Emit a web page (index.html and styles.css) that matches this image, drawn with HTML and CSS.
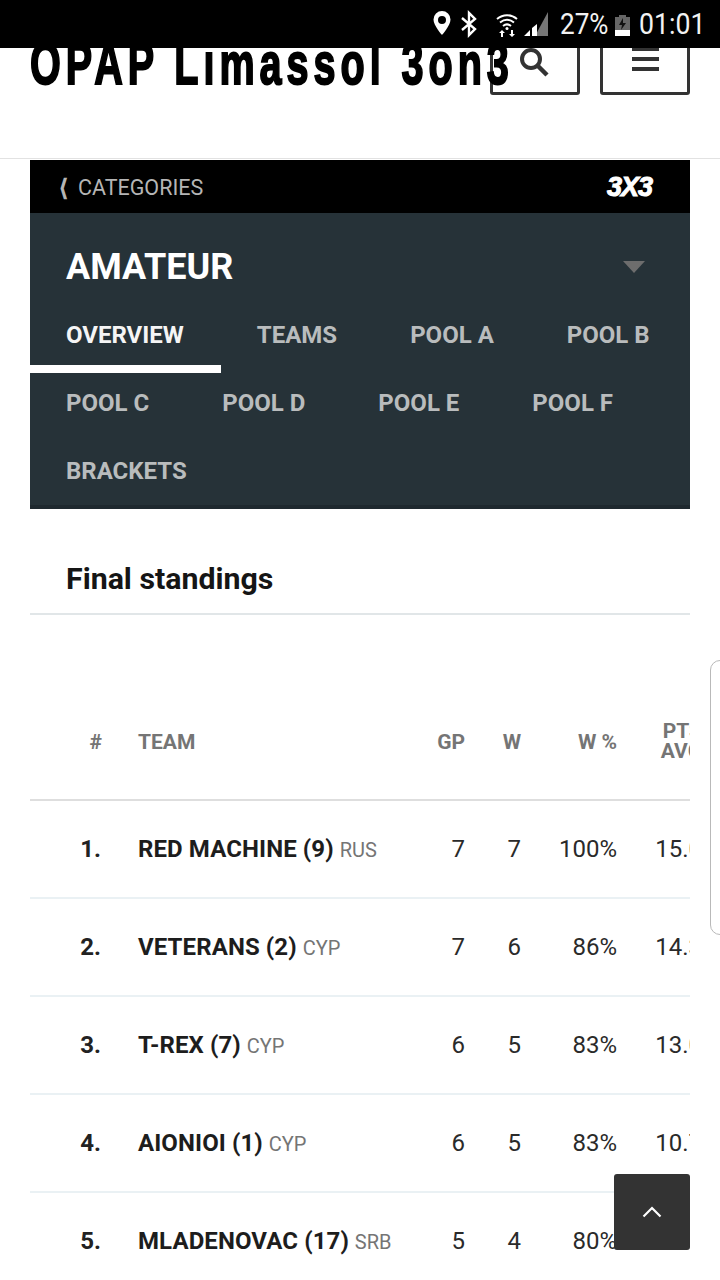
FILE: index.html
```html
<!DOCTYPE html>
<html lang="en">
<head>
<meta charset="utf-8">
<title>OPAP Limassol 3on3</title>
<link rel="stylesheet" href="styles.css">
</head>
<body>
<div class="statusbar">
  <svg class="si" width="20" height="28" viewBox="0 0 20 28"><path fill-rule="evenodd" fill="#fff" d="M10 1a8.500 8.500 0 0 0-8.500 8.500C1.500 15.500 10 25 10 25s8.500-9.500 8.500-15.500A8.500 8.500 0 0 0 10 1zm0 5a4 4 0 1 1 0 8 4 4 0 0 1 0-8z"/></svg>
  <svg class="si bt" width="18" height="28" viewBox="0 0 18 28"><path fill="none" stroke="#fff" stroke-width="2.400" d="M2 8l13 11-6 6V3l6 6L2 20"/></svg>
  <svg class="si wifi" width="24" height="28" viewBox="0 0 24 28"><g fill="none" stroke="#fff" stroke-width="2"><path d="M2 9c6-5 14-5 20 0"/><path d="M5 12.500c4.500-3.500 9.500-3.500 14 0"/><path d="M8 16c2.500-2 5.500-2 8 0"/></g><circle cx="12" cy="18.500" r="1.500" fill="#fff"/><path fill="#fff" d="M6 27v-4H4l3-3 3 3H8v4zM16 20v4h-2l3 3 3-3h-2v-4z"/></svg>
  <svg class="si sig" width="26" height="28" viewBox="0 0 26 28"><path fill="#777" d="M25 2v24H12z"/><path fill="#fff" d="M1 26l6-6v6zM9 18l5-4v12H9z"/></svg>
  <span class="pct">27%</span>
  <svg class="si batt" width="17" height="28" viewBox="0 0 17 28"><path fill="#666" d="M5 5h7v2h4v19H1V7h4z"/><path fill="#fff" d="M1 20h15v6H1z"/><path fill="#111" d="M9 8l-4 7h3l-1 5 5-7H9z"/></svg>
  <span class="clock">01:01</span>
</div>

<header class="site-header">
  <div class="logo">OPAP Limassol 3on3</div>
  <div class="hbtn search">
    <svg width="32" height="32" viewBox="0 0 32 32"><circle cx="13" cy="13" r="9" fill="none" stroke="#333" stroke-width="4"/><path d="M20 20l9 9" stroke="#333" stroke-width="4.500"/></svg>
  </div>
  <div class="hbtn menu">
    <span class="bar"></span><span class="bar"></span><span class="bar"></span>
  </div>
</header>

<section class="event">
  <div class="catbar">
    <span class="cat-link"><span class="cat-chev">&#10216;</span>CATEGORIES</span>
    <span class="mark">3X3</span>
  </div>
  <div class="panel">
    <div class="panel-title">
      <h1>AMATEUR</h1>
      <span class="caret"></span>
    </div>
    <nav class="tabs">
      <a class="tab active">OVERVIEW</a>
      <a class="tab">TEAMS</a>
      <a class="tab">POOL A</a>
      <a class="tab">POOL B</a>
      <a class="tab">POOL C</a>
      <a class="tab">POOL D</a>
      <a class="tab">POOL E</a>
      <a class="tab">POOL F</a>
      <a class="tab">BRACKETS</a>
    </nav>
  </div>
</section>

<section class="standings">
  <h2>Final standings</h2>
  <div class="table-wrap">
    <table>
      <colgroup>
        <col class="c-rank"><col class="c-team"><col class="c-gp"><col class="c-w"><col class="c-wp"><col class="c-pts">
      </colgroup>
      <thead>
        <tr><th>#</th><th class="left">TEAM</th><th>GP</th><th>W</th><th>W %</th><th class="two">PTS<br>AVG</th></tr>
      </thead>
      <tbody>
        <tr><td class="rank">1.</td><td class="team"><b>RED MACHINE (9)</b> <span>RUS</span></td><td>7</td><td>7</td><td>100%</td><td>15.0</td></tr>
        <tr><td class="rank">2.</td><td class="team"><b>VETERANS (2)</b> <span>CYP</span></td><td>7</td><td>6</td><td>86%</td><td>14.3</td></tr>
        <tr><td class="rank">3.</td><td class="team"><b>T-REX (7)</b> <span>CYP</span></td><td>6</td><td>5</td><td>83%</td><td>13.0</td></tr>
        <tr><td class="rank">4.</td><td class="team"><b>AIONIOI (1)</b> <span>CYP</span></td><td>6</td><td>5</td><td>83%</td><td>10.7</td></tr>
        <tr><td class="rank">5.</td><td class="team"><b>MLADENOVAC (17)</b> <span>SRB</span></td><td>5</td><td>4</td><td>80%</td><td>10.4</td></tr>
      </tbody>
    </table>
  </div>
</section>

<div class="edge-handle"></div>
<div class="to-top">
  <svg width="20" height="12" viewBox="0 0 20 12"><path d="M1.500 10.500L10 2l8.500 8.500" fill="none" stroke="#fff" stroke-width="2.200"/></svg>
</div>
</body>
</html>
```

FILE: styles.css
```css
* { box-sizing: border-box; }
html, body { margin: 0; padding: 0; }
body {
  width: 720px;
  height: 1280px;
  overflow: hidden;
  position: relative;
  background: #fff;
  font-family: Roboto, "Liberation Sans", sans-serif;
  color: #1d1d1d;
}

/* status bar */
.statusbar {
  height: 48px;
  background: #000;
  color: #f2f2f2;
  display: flex;
  align-items: center;
  justify-content: flex-end;
  padding: 0 16px 0 0;
  position: relative;
  z-index: 2;
}
.si { display: block; flex: none; }
.bt { margin-left: 8px; }
.wifi { margin-left: 17px; }
.sig { margin-left: 4px; }
.pct, .clock {
  display: block;
  font-size: 30px;
  line-height: 48px;
  white-space: nowrap;
  transform-origin: left center;
}
.pct { width: 48px; margin-left: 11px; transform: scaleX(.87); }
.batt { margin-left: 6px; }
.clock { width: 65px; margin-left: 8px; transform: scaleX(.89); }

/* header */
.site-header {
  height: 111px;
  border-bottom: 1px solid #e2e2e2;
  display: flex;
  padding: 0 30px;
  overflow: hidden;
  position: relative;
}
.logo {
  width: 460px;
  flex: none;
  margin-top: -19px;
  font-family: "Liberation Sans", sans-serif;
  font-weight: 700;
  font-size: 60px;
  line-height: 70px;
  letter-spacing: 7.500px;
  color: #000;
  white-space: nowrap;
  -webkit-text-stroke: 2px #000;
  transform: scaleX(.66);
  transform-origin: left center;
  position: relative;
  z-index: 1;
}
.hbtn {
  height: 61px;
  width: 90px;
  margin-top: -14px;
  border: 3px solid #333;
  border-radius: 3px;
  display: flex;
  flex-direction: column;
  align-items: center;
  flex: none;
}
.search { margin-left: 0; padding: 9px 2px 0 0; }
.menu { margin-left: 20px; padding-top: 10px; gap: 6px; }
.bar { display: block; width: 27px; height: 4px; background: #333; flex: none; }

/* event panel */
.event { margin: 1px 30px 0; }
.catbar {
  height: 53px;
  background: #000;
  display: flex;
  align-items: center;
  justify-content: space-between;
  padding: 2px 38px 0 28px;
}
.cat-link { color: #b5b5b5; font-size: 21.500px; display: flex; align-items: center; }
.cat-chev { width: 20px; font-size: 24px; font-weight: 700; font-family: "DejaVu Sans", sans-serif; }
.mark {
  color: #fff;
  font-family: "Liberation Sans", sans-serif;
  font-weight: 700;
  font-style: italic;
  font-size: 27px;
  letter-spacing: -1px;
  -webkit-text-stroke: 1px #fff;
}
.panel {
  height: 296px;
  background: #263238;
  border-bottom: 4px solid #1f292f;
}
.panel-title {
  height: 87px;
  padding: 20px 45px 0 36px;
  display: flex;
  align-items: center;
  justify-content: space-between;
}
.panel-title h1 {
  margin: 0;
  color: #fff;
  font-size: 36px;
  font-weight: 700;
}
.caret {
  width: 0;
  height: 0;
  border-left: 11px solid transparent;
  border-right: 11px solid transparent;
  border-top: 12px solid #6d6d6d;
}
.tabs { display: flex; flex-wrap: wrap; }
.tab {
  position: relative;
  height: 68px;
  line-height: 70px;
  padding: 0 37px 0 36px;
  font-size: 24px;
  font-weight: 700;
  color: #b9bcbd;
  white-space: nowrap;
}
.tab.active { color: #f5f5f5; }
.tab.active::after {
  content: "";
  position: absolute;
  left: 0;
  right: 0;
  bottom: -5px;
  height: 8px;
  background: #fff;
}

/* standings */
.standings { margin: 0 30px; }
.standings h2 {
  margin: 0;
  height: 106px;
  padding: 50px 0 0 36px;
  border-bottom: 2px solid #e1e6e8;
  font-size: 30.300px;
  line-height: 40px;
  font-weight: 700;
  color: #151515;
}
.table-wrap { overflow: hidden; width: 660px; margin-top: 64px; }
table {
  border-collapse: collapse;
  table-layout: fixed;
  width: 688px;
}
.c-rank { width: 88px; }
.c-team { width: 312px; }
.c-gp { width: 51px; }
.c-w { width: 56px; }
.c-wp { width: 96px; }
.c-pts { width: 85px; }
th {
  height: 121px;
  padding: 5px 16px 0 0;
  text-align: right;
  font-size: 21px;
  font-weight: 700;
  color: #757575;
  border-bottom: 2px solid #dedede;
  white-space: nowrap;
}
th.left { text-align: left; padding: 5px 0 0 20px; }
th.two { line-height: 20px; padding-top: 4px; }
td {
  height: 98px;
  padding: 0 16px 0 0;
  text-align: right;
  font-size: 24px;
  color: #2a2a2a;
  border-bottom: 2px solid #eaf1f4;
  white-space: nowrap;
}
td.rank { font-weight: 700; color: #222; padding-right: 17px; }
td.team { text-align: left; padding: 0 0 0 20px; }
td.team b { font-weight: 700; color: #1d1d1d; letter-spacing: .1px; }
td.team span { font-size: 20px; color: #757575; }

/* overlays */
.edge-handle {
  position: absolute;
  right: -8px;
  top: 660px;
  width: 18px;
  height: 275px;
  border: 1px solid #b9b9b9;
  border-radius: 10px 0 0 10px;
  background: #fff;
}
.to-top {
  position: absolute;
  left: 614px;
  top: 1174px;
  width: 76px;
  height: 76px;
  background: #333;
  border-radius: 3px;
  display: flex;
  align-items: center;
  justify-content: center;
  z-index: 3;
}
```
